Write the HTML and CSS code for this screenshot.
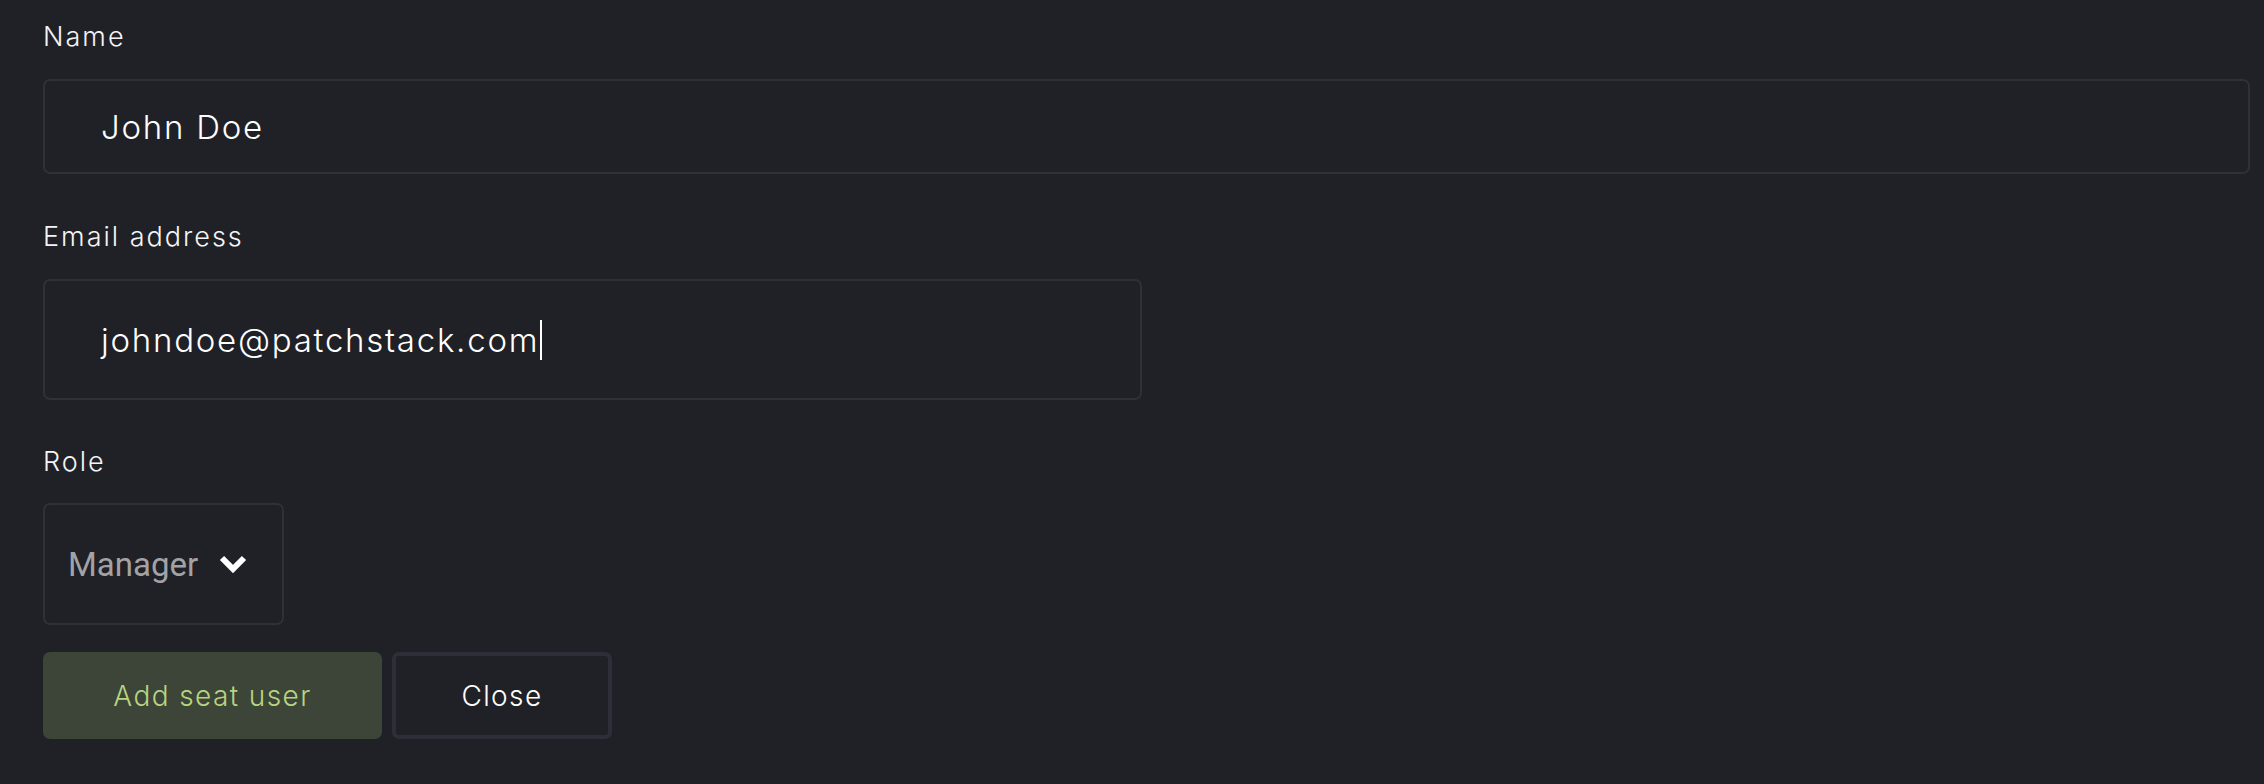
FILE: index.html
```html
<!DOCTYPE html>
<html lang="en">
<head>
<meta charset="utf-8">
<title>Add seat user</title>
<link rel="stylesheet" href="styles.css">
</head>
<body>
<form class="form">
  <div class="field">
    <label class="label">Name</label>
    <div class="input input-name"><span class="value">John Doe</span></div>
  </div>
  <div class="field">
    <label class="label">Email address</label>
    <div class="input input-email"><span class="value">johndoe@patchstack.com</span><span class="caret"></span></div>
  </div>
  <div class="field">
    <label class="label">Role</label>
    <div class="select">
      <span class="select-value">Manager</span>
      <svg class="chevron" width="28" height="19" viewBox="0 0 28 19" aria-hidden="true">
        <polyline points="3,3 14,14 25,3" fill="none" stroke="#ffffff" stroke-width="6" stroke-linejoin="miter" stroke-linecap="butt"/>
      </svg>
    </div>
  </div>
  <div class="actions">
    <button type="button" class="btn btn-primary">Add seat user</button>
    <button type="button" class="btn btn-secondary">Close</button>
  </div>
</form>
</body>
</html>
```
FILE: styles.css
```css
html, body {
  margin: 0;
  padding: 0;
  background: #202127;
}
body {
  font-family: Inter, "Open Sans", sans-serif;
  color: #ffffff;
}
.form {
  display: flex;
  flex-direction: column;
  padding: 22px 14px 0 43px;
}
.field {
  display: flex;
  flex-direction: column;
  margin-bottom: 48px;
}
.field:nth-child(2) {
  margin-bottom: 47px;
}
.field:nth-child(3) {
  margin-bottom: 27px;
}
.label {
  font-size: 27px;
  line-height: 30px;
  font-weight: 300;
  letter-spacing: 2px;
  color: #f4f4f6;
  margin-bottom: 27px;
}
.field:nth-child(3) .label {
  margin-bottom: 26px;
}
.input {
  box-sizing: border-box;
  display: flex;
  align-items: center;
  border: 2px solid #2f3038;
  border-radius: 7px;
  padding-left: 56px;
  font-size: 33px;
  font-weight: 300;
  letter-spacing: 1.75px;
  color: #ffffff;
}
.input-name {
  height: 95px;
  width: 100%;
}
.input-email {
  height: 121px;
  width: 1099px;
}
.caret {
  display: inline-block;
  width: 2px;
  height: 40px;
  background: #ffffff;
  margin-left: 1px;
}
.select {
  box-sizing: border-box;
  display: flex;
  align-items: center;
  width: 241px;
  height: 122px;
  border: 2px solid #2f3038;
  border-radius: 7px;
  padding-left: 23px;
}
.select-value {
  font-family: Roboto, "Liberation Sans", sans-serif;
  font-size: 33px;
  color: #a3a3a6;
}
.chevron {
  margin-left: 21px;
}
.actions {
  display: flex;
  gap: 10px;
}
.btn {
  box-sizing: border-box;
  height: 87px;
  border-radius: 7px;
  font-family: Inter, "Open Sans", sans-serif;
  font-size: 28px;
  font-weight: 300;
  letter-spacing: 1.4px;
  cursor: pointer;
}
.btn-primary {
  width: 339px;
  background: #3c4538;
  border: none;
  color: #b8d47f;
}
.btn-secondary {
  width: 220px;
  background: #202127;
  border: 4px solid #2d2e37;
  color: #ffffff;
}
```
